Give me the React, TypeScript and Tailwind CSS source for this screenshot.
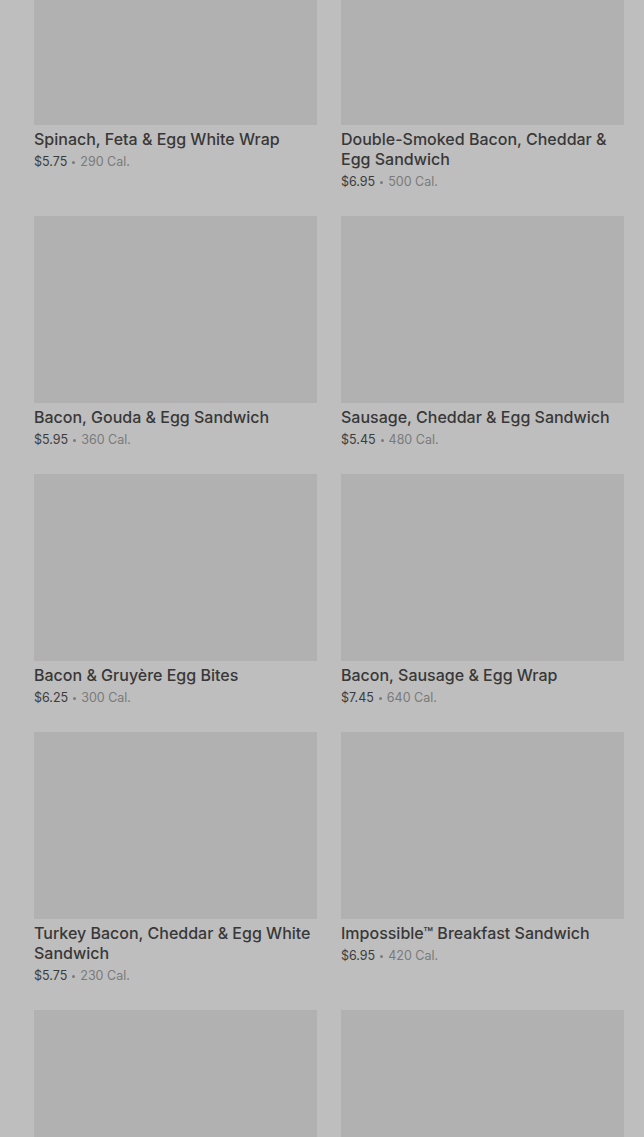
const items = [
  { name: "Spinach, Feta & Egg White Wrap", price: "$5.75", cal: "290 Cal." },
  { name: "Double-Smoked Bacon, Cheddar & Egg Sandwich", price: "$6.95", cal: "500 Cal." },
  { name: "Bacon, Gouda & Egg Sandwich", price: "$5.95", cal: "360 Cal." },
  { name: "Sausage, Cheddar & Egg Sandwich", price: "$5.45", cal: "480 Cal." },
  { name: "Bacon & Gruyère Egg Bites", price: "$6.25", cal: "300 Cal." },
  { name: "Bacon, Sausage & Egg Wrap", price: "$7.45", cal: "640 Cal." },
  { name: "Turkey Bacon, Cheddar & Egg White Sandwich", price: "$5.75", cal: "230 Cal." },
  { name: "Impossible™ Breakfast Sandwich", price: "$6.95", cal: "420 Cal." },
  { name: "", price: "", cal: "" },
  { name: "", price: "", cal: "" },
];

export default function App() {
  return (
    <div
      className="h-[1137px] overflow-hidden bg-[#bebebe]"
      style={{ fontFamily: "Inter, 'Noto Sans', sans-serif" }}
    >
      <div className="-mt-[62px] grid grid-cols-2 gap-x-6 gap-y-[25px] pl-[34px] pr-5">
        {items.map((item, i) => (
          <div key={i}>
            <div className="h-[187px] w-full bg-[#b1b1b1]" />
            {item.name && (
              <>
                <h3 className="mt-1 text-base font-medium leading-5 text-[#383838]">
                  {item.name}
                </h3>
                <p className="mt-1 flex items-center gap-[5px] text-[12.5px] leading-[18px]">
                  <span className="text-[#3c3c3c]">{item.price}</span>
                  <span className="h-[3px] w-[3px] rounded-full bg-[#7a7a7a]" />
                  <span className="text-[#7a7a7a]">{item.cal}</span>
                </p>
              </>
            )}
          </div>
        ))}
      </div>
    </div>
  );
}
